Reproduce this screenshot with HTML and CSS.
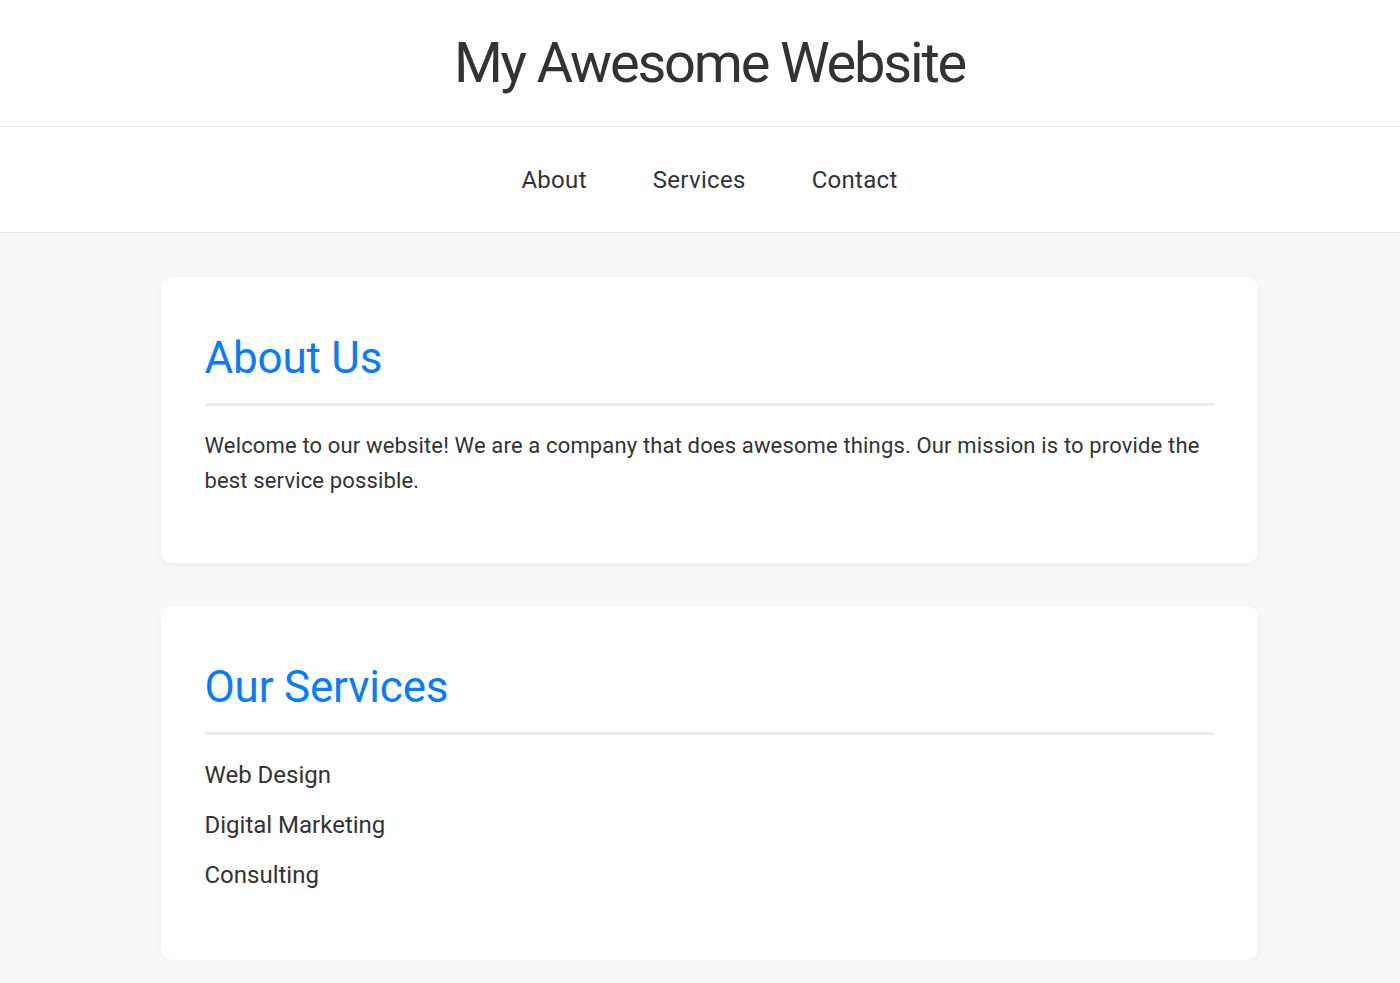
FILE: index.html
```html
<!DOCTYPE html>
<html lang="en">
<head>
<meta charset="utf-8">
<title>My Awesome Website</title>
<link rel="stylesheet" href="styles.css">
</head>
<body>
<header class="site-header">
  <h1 class="site-title">My Awesome Website</h1>
</header>
<nav class="site-nav">
  <a href="#about" class="nav-link">About</a>
  <a href="#services" class="nav-link">Services</a>
  <a href="#contact" class="nav-link">Contact</a>
</nav>
<main class="content">
  <section class="card" id="about">
    <h2 class="card-title">About Us</h2>
    <p class="card-text">Welcome to our website! We are a company that does awesome things. Our mission is to provide the best service possible.</p>
  </section>
  <section class="card" id="services">
    <h2 class="card-title">Our Services</h2>
    <ul class="service-list">
      <li>Web Design</li>
      <li>Digital Marketing</li>
      <li>Consulting</li>
    </ul>
  </section>
</main>
</body>
</html>
```
FILE: styles.css
```css
* { box-sizing: border-box; }
html, body { margin: 0; padding: 0; }
body {
  font-family: Roboto, Inter, "Noto Sans", sans-serif;
  font-size: 22px;
  color: #333;
  background: #f8f8f8;
}
.site-header {
  background: #fff;
  border-bottom: 1px solid #e8e8e8;
  height: 127px;
  display: flex;
  align-items: center;
  justify-content: center;
  padding-left: 19px;
}
.site-title {
  margin: 0;
  font-size: 56px;
  font-weight: 400;
  color: #333;
  letter-spacing: -2.2px;
}
.site-nav {
  background: #fff;
  border-bottom: 1px solid #e8e8e8;
  height: 106px;
  display: flex;
  align-items: center;
  justify-content: center;
  gap: 22px;
  padding-left: 19px;
}
.nav-link {
  color: #333;
  text-decoration: none;
  padding: 0 22px;
  font-size: 24px;
  letter-spacing: 0.3px;
}
.content {
  width: 1097px;
  margin: 44px auto 0;
  position: relative;
  left: 9px;
  display: flex;
  flex-direction: column;
  gap: 43px;
}
.card {
  background: #fff;
  border-radius: 11px;
  box-shadow: 0 2px 6px rgba(0,0,0,0.05);
  padding: 44px;
}
.card-title {
  margin: 0;
  padding: 11px 0 18px;
  font-size: 44px;
  font-weight: 400;
  color: #0a7bff;
  border-bottom: 3px solid #eee;
  line-height: 1.2;
  letter-spacing: -0.2px;
}
.card-text {
  margin: 22px 0 21px;
  line-height: 35px;
  letter-spacing: 0.15px;
}
.service-list {
  list-style: none;
  margin: 15px 0 16px;
  padding: 0;
  font-size: 24px;
}
.service-list li {
  line-height: 50px;
}
```
